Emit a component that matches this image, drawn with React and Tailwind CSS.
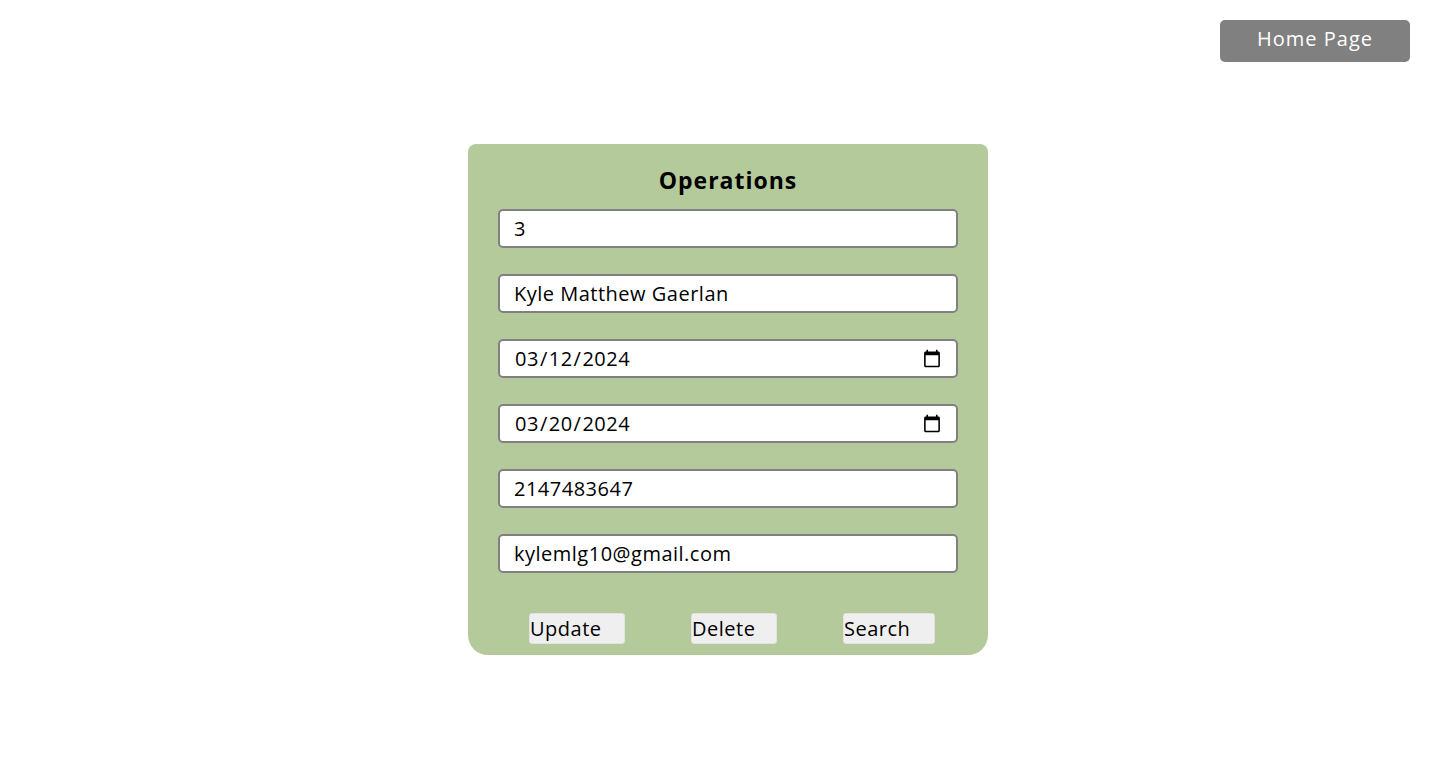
import React from "react";

const inputCls =
  "w-[460px] h-[39px] rounded-[5px] border-2 border-[#808080] bg-white pl-[14px] pr-[12px] text-[20px] tracking-[0.5px] text-black outline-none";

const btnCls =
  "h-[31px] rounded-[3px] border border-[#e2e2e2] bg-[#efefef] text-left text-[20px] tracking-[0.5px] leading-[29px] text-black";

export default function App() {
  return (
    <div className="min-h-[772px] w-full bg-white font-['Open_Sans',sans-serif]">
      <div className="flex justify-end pt-[20px] pr-[28px]">
        <button className="w-[190px] h-[42px] rounded-[5px] bg-[#808080] text-white text-[20px] tracking-[1px] leading-[38px] pb-[4px]">
          Home Page
        </button>
      </div>
      <div className="flex justify-center pl-[18px] mt-[82px]">
        <div className="w-[520px] h-[511px] bg-[#b5ca9b] rounded-t-[8px] rounded-b-[20px] pt-[19px] flex flex-col">
          <h1 className="text-center text-[23px] tracking-[1px] font-bold leading-[34px] text-black">Operations</h1>
          <div className="mt-[12px] flex flex-col items-center gap-[26px]">
            <input className={inputCls} defaultValue="3" />
            <input className={inputCls} defaultValue="Kyle Matthew Gaerlan" />
            <input type="date" className={inputCls} defaultValue="2024-03-12" />
            <input type="date" className={inputCls} defaultValue="2024-03-20" />
            <input className={inputCls} defaultValue="2147483647" />
            <input className={inputCls} defaultValue="kylemlg10@gmail.com" />
          </div>
          <div className="mt-[40px] flex pl-[61px] gap-[66px]">
            <button className={`${btnCls} w-[96px]`}>Update</button>
            <button className={`${btnCls} w-[86px]`}>Delete</button>
            <button className={`${btnCls} w-[92px]`}>Search</button>
          </div>
        </div>
      </div>
    </div>
  );
}
